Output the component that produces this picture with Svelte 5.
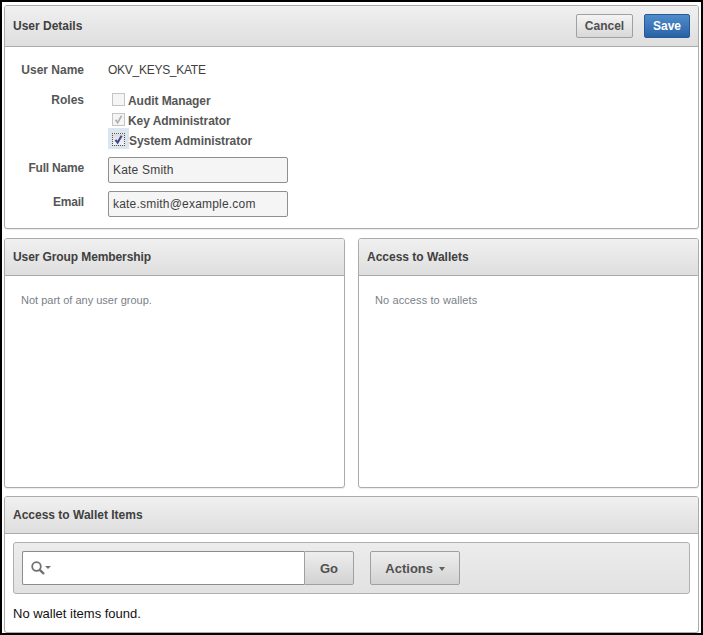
<script>
	const roles = [
		{ name: 'Audit Manager', state: 'off' },
		{ name: 'Key Administrator', state: 'locked' },
		{ name: 'System Administrator', state: 'focus' }
	];
</script>

<div class="frame">
	<section class="panel details">
		<header class="panel-head">
			<h2>User Details</h2>
			<div class="actions">
				<button class="btn cancel">Cancel</button>
				<button class="btn save">Save</button>
			</div>
		</header>
		<div class="form">
			<div class="label name-label">User Name</div>
			<div class="value">OKV_KEYS_KATE</div>

			<div class="label roles-label">Roles</div>
			<div class="roles">
				{#each roles as role}
					<div class="role {role.state}">
						<span class="box">
							{#if role.state !== 'off'}
								<svg viewBox="0 0 11 11" width="11" height="11">
									<path d="M2.5 5.8 L4.6 8.6 L8.6 1.8" fill="none" stroke-width="1.7" />
								</svg>
							{/if}
						</span>
						<span>{role.name}</span>
					</div>
				{/each}
			</div>

			<div class="label field-label">Full Name</div>
			<div class="input">Kate Smith</div>

			<div class="label field-label">Email</div>
			<div class="input">kate.smith@example.com</div>
		</div>
	</section>

	<div class="columns">
		<section class="panel column">
			<header class="panel-head short"><h2 class="tight">User Group Membership</h2></header>
			<p class="empty">Not part of any user group.</p>
		</section>
		<section class="panel column">
			<header class="panel-head short"><h2>Access to Wallets</h2></header>
			<p class="empty wide">No access to wallets</p>
		</section>
	</div>

	<section class="panel items">
		<header class="panel-head thin"><h2>Access to Wallet Items</h2></header>
		<div class="toolbar">
			<div class="search">
				<div class="search-field">
					<svg viewBox="0 0 22 16" width="22" height="16">
						<circle cx="5.5" cy="6.5" r="4.3" fill="none" stroke="#707070" stroke-width="1.8" />
						<path d="M8.8 9.8 L13 14" stroke="#707070" stroke-width="2.4" fill="none" />
						<path d="M14 6 H20 L17 9 Z" fill="#707070" />
					</svg>
				</div>
				<button class="tool go">Go</button>
			</div>
			<button class="tool menu">Actions <i class="caret"></i></button>
		</div>
		<p class="none">No wallet items found.</p>
	</section>
</div>

<style>
	:global(body) {
		margin: 0;
		background: #fff;
	}

	.frame {
		box-sizing: border-box;
		width: 703px;
		height: 635px;
		border: 2px solid #000;
		padding: 3px 2px 0;
		display: flex;
		flex-direction: column;
		gap: 8px;
		font-family: 'Liberation Sans', Arial, sans-serif;
		font-size: 12px;
		color: #404040;
		background: #fff;
	}

	.panel {
		box-sizing: border-box;
		background: #fff;
		border: 1px solid #ababab;
		border-radius: 3px;
		box-shadow: 0 1px 1px rgba(0, 0, 0, 0.08);
	}

	.panel-head {
		box-sizing: border-box;
		height: 41px;
		padding: 0 8px;
		display: flex;
		align-items: center;
		justify-content: space-between;
		background: linear-gradient(#f0f0f0, #dedede);
		border-bottom: 1px solid #ababab;
		border-radius: 2px 2px 0 0;
	}

	.panel-head.short {
		height: 37px;
	}

	.panel-head.thin {
		height: 37px;
		padding-bottom: 1px;
	}

	h2 {
		margin: 0;
		font-size: 12px;
		font-weight: 700;
		color: #404040;
	}

	h2.tight {
		letter-spacing: -0.1px;
	}

	.actions {
		display: flex;
		gap: 11px;
	}

	.btn {
		box-sizing: border-box;
		height: 24px;
		padding: 0;
		font: 700 12px 'Liberation Sans', Arial, sans-serif;
		border-radius: 2px;
	}

	.cancel {
		width: 57px;
		color: #505050;
		border: 1px solid #a0a0a0;
		background: linear-gradient(#f4f4f4, #d8d8d8);
	}

	.save {
		width: 46px;
		color: #fff;
		border: 1px solid #2a5a94;
		background: linear-gradient(#4f8ccb, #2a62a6);
	}

	.details {
		height: 225px;
	}

	.form {
		display: grid;
		grid-template-columns: 79px 1fr;
		column-gap: 24px;
		padding-top: 16px;
	}

	.label {
		font-weight: 700;
		color: #565656;
		text-align: right;
		line-height: 14px;
	}

	.value {
		line-height: 14px;
		color: #404040;
		letter-spacing: -0.27px;
	}

	.name-label,
	.value {
		height: 14px;
		margin-bottom: 14px;
	}

	.roles-label {
		margin-top: 2px;
	}

	.roles {
		display: flex;
		flex-direction: column;
		height: 63px;
		margin-left: 4px;
		margin-bottom: 3px;
	}

	.role {
		display: flex;
		align-items: center;
		gap: 3px;
		height: 20px;
		font-weight: 700;
		color: #565656;
		letter-spacing: -0.06px;
	}

	.box {
		box-sizing: border-box;
		display: flex;
		align-items: center;
		justify-content: center;
		width: 13px;
		height: 13px;
		border: 1px solid #c4c4c4;
		background: #f5f5f5;
		margin-top: -3px;
	}

	.box path {
		stroke: #b0b0b0;
	}

	.focus {
		position: relative;
		gap: 4px;
	}

	.focus::before {
		content: '';
		position: absolute;
		left: -4px;
		top: -3px;
		width: 21px;
		height: 21px;
		background: #dce6f1;
	}

	.focus .box {
		position: relative;
		border: 1px dotted #555;
		background: linear-gradient(#dcdcdc, #f4f4f4);
	}

	.focus span:last-child {
		position: relative;
	}

	.focus .box path {
		stroke: #3b4a9a;
		stroke-width: 2;
	}

	.input {
		box-sizing: border-box;
		width: 180px;
		height: 26px;
		padding: 0 4px;
		line-height: 24px;
		color: #404040;
		background: #f5f5f5;
		border: 1px solid #8f8f8f;
		border-radius: 2px;
		margin-bottom: 8px;
		letter-spacing: 0.2px;
	}

	.field-label {
		line-height: 22px;
		letter-spacing: -0.2px;
	}

	.columns {
		display: flex;
		gap: 13px;
		height: 251px;
		margin-top: 1px;
	}

	.column {
		flex: 1;
	}

	.empty {
		margin: 17px 16px;
		font-size: 11px;
		line-height: 14px;
		color: #7a7f88;
	}

	.empty.wide {
		letter-spacing: 0.1px;
	}

	.items {
		height: 137px;
	}

	.toolbar {
		box-sizing: border-box;
		display: flex;
		gap: 16px;
		height: 52px;
		margin: 8px 8px 0;
		padding: 8px;
		background: linear-gradient(#ececec, #e2e2e2);
		border: 1px solid #b0b0b0;
		border-radius: 3px;
	}

	.search {
		display: flex;
		width: 332px;
		height: 34px;
	}

	.search-field {
		box-sizing: border-box;
		flex: 1;
		padding: 8px 0 0 8px;
		background: #fff;
		border: 1px solid #8c8c8c;
		border-right: none;
		border-radius: 2px 0 0 2px;
	}

	.tool {
		box-sizing: border-box;
		height: 34px;
		padding: 0;
		font: 700 13px 'Liberation Sans', Arial, sans-serif;
		color: #505050;
		border: 1px solid #a0a0a0;
		background: linear-gradient(#eeeeee, #d2d2d2);
	}

	.go {
		width: 50px;
		border-radius: 0 2px 2px 0;
	}

	.menu {
		width: 90px;
		border-radius: 2px;
	}

	.caret {
		display: inline-block;
		margin-left: 2px;
		vertical-align: 2px;
		border: solid transparent;
		border-width: 4px 3.5px 0;
		border-top-color: #606060;
	}

	.none {
		margin: 13px 8px 0;
		font-size: 13px;
		line-height: 14px;
		color: #111;
	}
</style>
